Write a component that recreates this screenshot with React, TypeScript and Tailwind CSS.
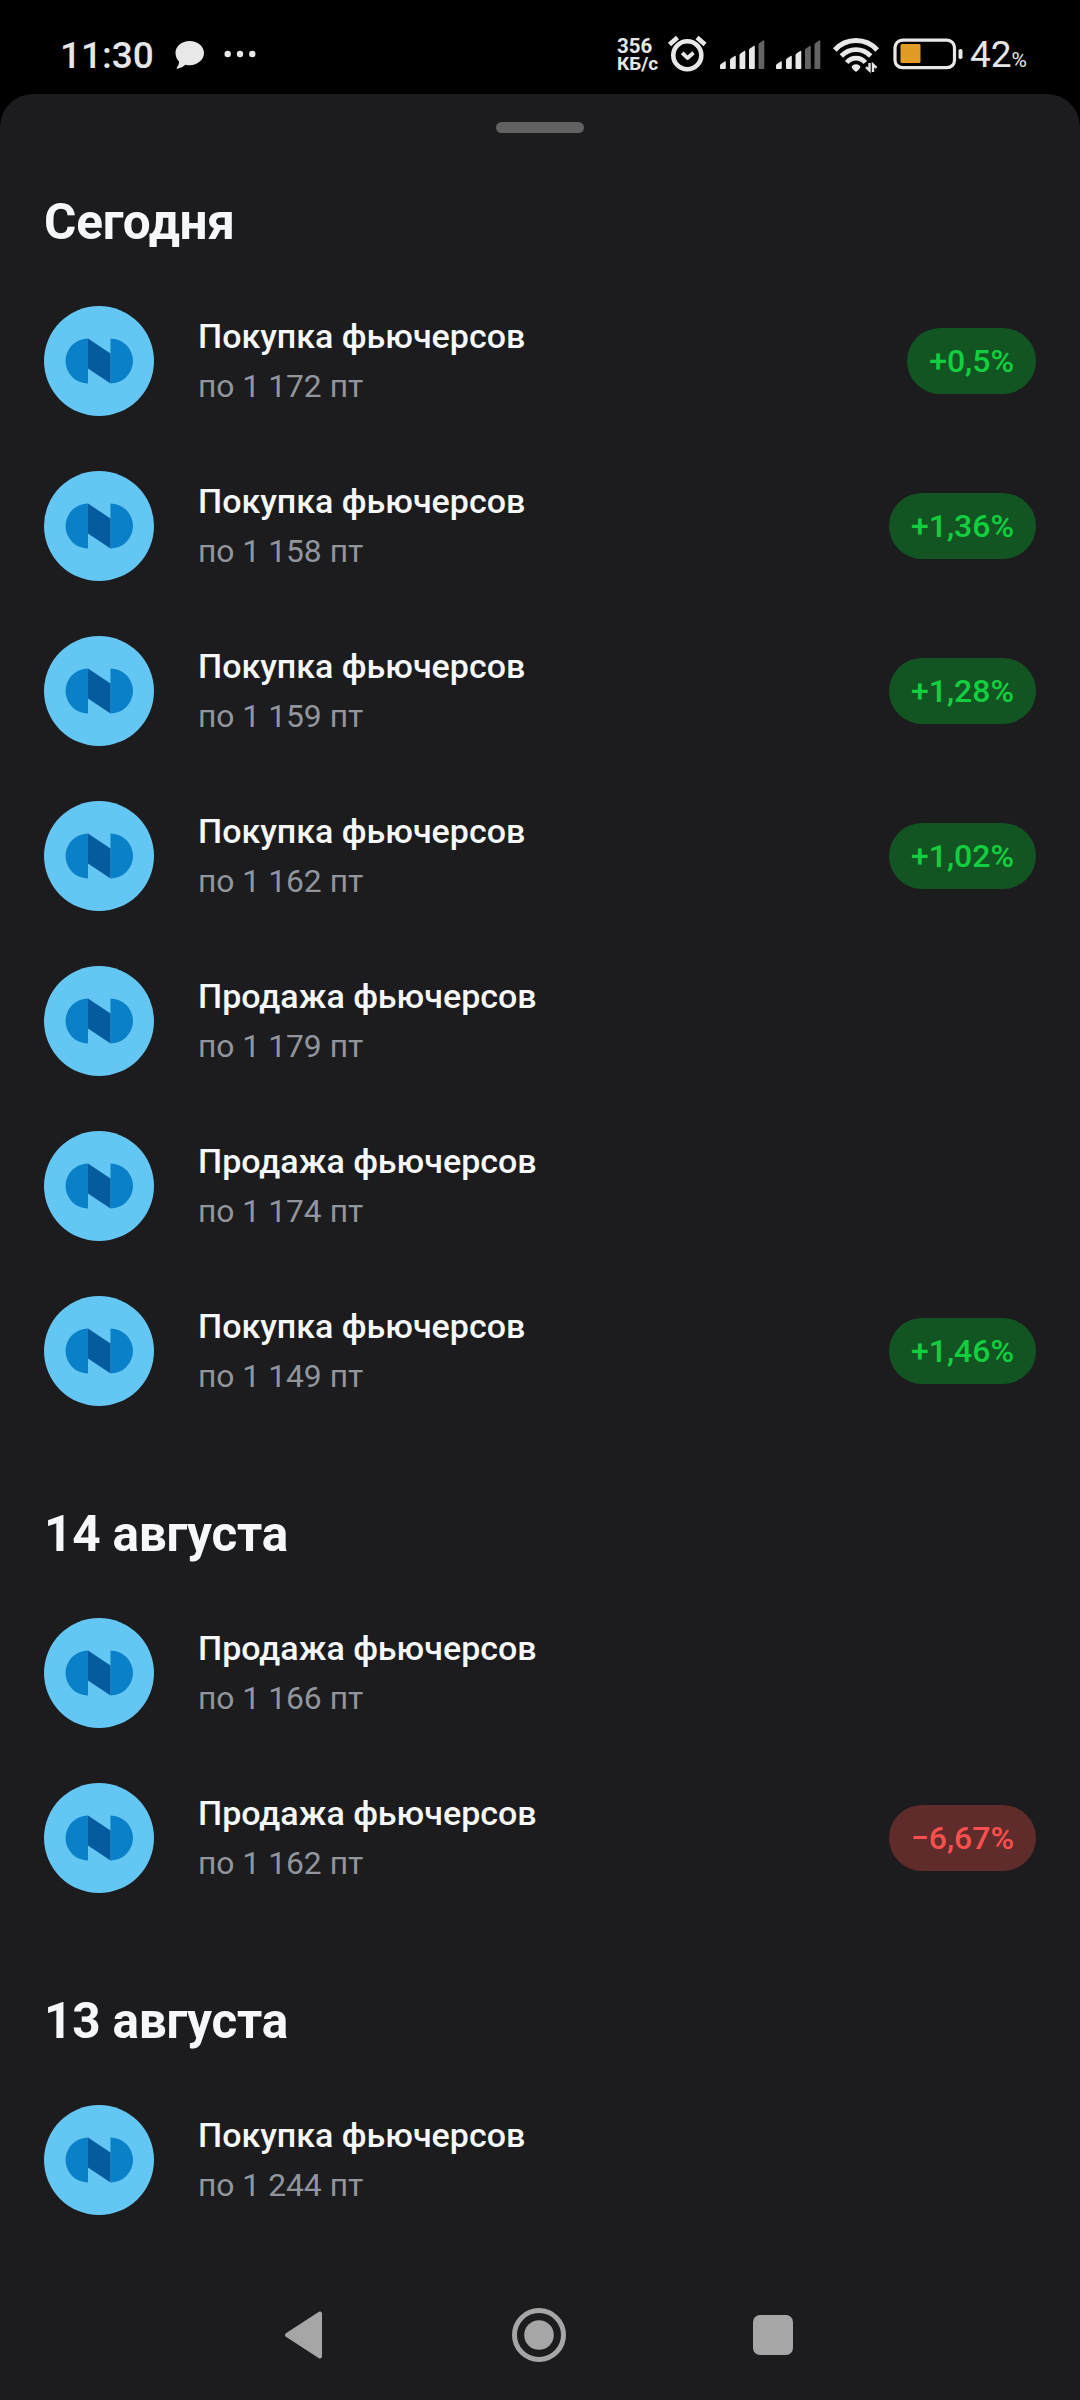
type Trade = {
  title: string;
  price: string;
  change?: string;
};

const sections: { date: string; trades: Trade[] }[] = [
  {
    date: "Сегодня",
    trades: [
      { title: "Покупка фьючерсов", price: "по 1 172 пт", change: "+0,5%" },
      { title: "Покупка фьючерсов", price: "по 1 158 пт", change: "+1,36%" },
      { title: "Покупка фьючерсов", price: "по 1 159 пт", change: "+1,28%" },
      { title: "Покупка фьючерсов", price: "по 1 162 пт", change: "+1,02%" },
      { title: "Продажа фьючерсов", price: "по 1 179 пт" },
      { title: "Продажа фьючерсов", price: "по 1 174 пт" },
      { title: "Покупка фьючерсов", price: "по 1 149 пт", change: "+1,46%" },
    ],
  },
  {
    date: "14 августа",
    trades: [
      { title: "Продажа фьючерсов", price: "по 1 166 пт" },
      { title: "Продажа фьючерсов", price: "по 1 162 пт", change: "−6,67%" },
    ],
  },
  {
    date: "13 августа",
    trades: [{ title: "Покупка фьючерсов", price: "по 1 244 пт" }],
  },
];

function Signal({ level, className }: { level: number; className: string }) {
  const bars = [
    { x: 0, y: 21 },
    { x: 10, y: 15.5 },
    { x: 19.5, y: 10.5 },
    { x: 29, y: 5.5 },
    { x: 38.5, y: 0 },
  ];
  return (
    <svg className={className} width="45" height="29" viewBox="0 0 45 29">
      {bars.map((bar, i) => (
        <path
          key={i}
          d={`M${bar.x} 28V${bar.y + 4.5}q0-1 1-1.6l3.6-2.4q1.2-.5 1.2.8V28q0 1-1 1h-3.8q-1 0-1-1z`}
          fill={i < level ? "#e8e8e8" : "#636363"}
        />
      ))}
    </svg>
  );
}

function StatusBar() {
  return (
    <header className="flex h-[94px] items-start pt-[32px] pl-[60px] text-[#e6e6e6]">
      <span className="w-[115px] text-[37px] leading-[47px] font-medium">11:30</span>
      <svg className="mt-[9px]" width="30" height="29" viewBox="0 0 30 29" fill="#e8e8e8">
        <path d="M14.7 0C22.6 0 29 5.4 29 12s-6.4 12.2-14.3 12.2q-2.3 0-4.3-.5Q7.5 27 2.3 27.8q-1.3.1-.5-1Q4 24 4.2 20.8.5 17 .5 12C.5 5.4 6.8 0 14.7 0z" />
      </svg>
      <svg className="mt-[18px] ml-[19px]" width="32" height="8" viewBox="0 0 32 8" fill="#e8e8e8">
        <circle cx="3.7" cy="4" r="3.2" />
        <circle cx="16" cy="4" r="3.2" />
        <circle cx="28.3" cy="4" r="3.2" />
      </svg>
      <div className="mt-[5px] ml-[361px] flex w-[50px] flex-col text-[20.5px] leading-[18px] font-bold">
        <span>356</span>
        <span className="text-[19px]">КБ/с</span>
      </div>
      <svg className="mt-[2px]" width="42" height="40" viewBox="0 0 42 40" fill="none" stroke="#e8e8e8" strokeWidth="4.6">
        <circle cx="20.3" cy="21.3" r="14" />
        <path d="M2.5 10.5 10.5 3.5M30 3.5l8 7" />
        <path d="m15.2 18.8 5.3 5.2 6-5.2" strokeWidth="3.8" strokeLinejoin="round" />
      </svg>
      <Signal level={4} className="mt-[8px] ml-[11px]" />
      <Signal level={3} className="mt-[8px] ml-[11px]" />
      <svg className="mt-[4px] ml-[11px]" width="48" height="38" viewBox="0 0 48 38" fill="none" stroke="#e8e8e8" strokeWidth="5">
        <path d="M2.8 14A28.5 28.5 0 0 1 45.2 14" />
        <path d="M9.3 20A20 20 0 0 1 38.7 20" strokeWidth="4.8" />
        <path d="M14.7 26.5A12 12 0 0 1 33.3 26.5" strokeWidth="4.6" />
        <path d="M24 35.8q-1.2 0-4-3.8-1-1.6.5-2.6 3.5-2.4 7 0 1.5 1 .5 2.6-2.8 3.8-4 3.8z" fill="#e8e8e8" stroke="none" />
        <path d="M37.5 27v7.5l-3.500-3.300M41 36v-7.500l3.500 3.300" strokeWidth="2.4" />
      </svg>
      <svg className="mt-[6px] ml-[13px]" width="70" height="32" viewBox="0 0 70 32">
        <rect x="2" y="2.2" width="59.5" height="27.5" rx="7.5" fill="none" stroke="#e8e8e8" strokeWidth="3.2" />
        <rect x="7.5" y="6" width="20" height="19" rx="1.5" fill="#e09c27" />
        <rect x="65.5" y="11" width="4" height="10" rx="1.8" fill="#e8e8e8" />
      </svg>
      <span className="ml-[7px] flex items-baseline text-[37px] leading-[46px] font-[450]">
        42
        <span className="text-[21px] font-normal">%</span>
      </span>
    </header>
  );
}

function CompanyLogo() {
  return (
    <svg className="shrink-0" width="110" height="110" viewBox="0 0 110 110">
      <circle cx="55" cy="55" r="55" fill="#64c6f2" />
      <path d="M44 32.5v45a22.5 22.5 0 0 1 0-45z" fill="#0a80c8" />
      <path d="M66.5 32.5a22.5 22.5 0 0 1 0 45z" fill="#0a80c8" />
      <path d="M44 32.5 66.5 47.5v30L44 62.5z" fill="#045c9f" />
    </svg>
  );
}

function ChangeBadge({ value }: { value: string }) {
  const colors = value.startsWith("+") ? "bg-[#125523] text-[#13cf3f]" : "bg-[#5f2b2b] text-[#f9504d]";
  return (
    <span className={`ml-auto h-[66px] rounded-full px-[22px] text-[32px] leading-[66px] font-medium ${colors}`}>
      {value}
    </span>
  );
}

function TradeRow({ trade }: { trade: Trade }) {
  return (
    <li className="flex h-[165px] items-center pt-[27px] pb-[28px]">
      <CompanyLogo />
      <div className="mb-px ml-[44px] flex flex-col pb-px">
        <span className="mt-px text-[34px] leading-[52px] font-medium text-[#f6f7f8]">{trade.title}</span>
        <span className="text-[31.8px] leading-[49px] text-[#92959c]">{trade.price}</span>
      </div>
      {trade.change && <ChangeBadge value={trade.change} />}
    </li>
  );
}

function NavigationBar() {
  return (
    <nav className="mt-[59px] flex items-center pl-[284px]">
      <svg width="40" height="66" viewBox="0 0 40 66">
        <path d="M3 33 36 11.5V54.5z" fill="#a6a6a6" stroke="#a6a6a6" strokeWidth="4" strokeLinejoin="round" />
      </svg>
      <svg className="ml-[185px]" width="60" height="66" viewBox="0 0 60 66">
        <circle cx="30" cy="33" r="24.5" fill="none" stroke="#a6a6a6" strokeWidth="5" />
        <circle cx="30" cy="33" r="14.8" fill="#a6a6a6" />
      </svg>
      <span className="ml-[184px] size-10 rounded-[7px] bg-[#a6a6a6]" />
    </nav>
  );
}

export default function App() {
  return (
    <div className="h-[2400px] w-[1080px] overflow-hidden bg-black font-['Roboto',sans-serif]">
      <StatusBar />
      <main className="h-[2306px] rounded-t-[33px] bg-[#1c1c1e] pt-[28px]">
        {/* Drag handle, takes no room in the list */}
        <div className="mx-auto mb-[-11px] h-[11px] w-[88px] rounded-full bg-[#616162]" />
        {sections.map((section) => (
          <section key={section.date} className="px-[44px]">
            <h2 className="h-[157px] pt-[70px] text-[49.5px] leading-[60px] font-bold tracking-[-0.2px] text-[#f6f7f8]">
              {section.date}
            </h2>
            <ul>
              {section.trades.map((trade, i) => (
                <TradeRow key={i} trade={trade} />
              ))}
            </ul>
          </section>
        ))}
        <NavigationBar />
      </main>
    </div>
  );
}
